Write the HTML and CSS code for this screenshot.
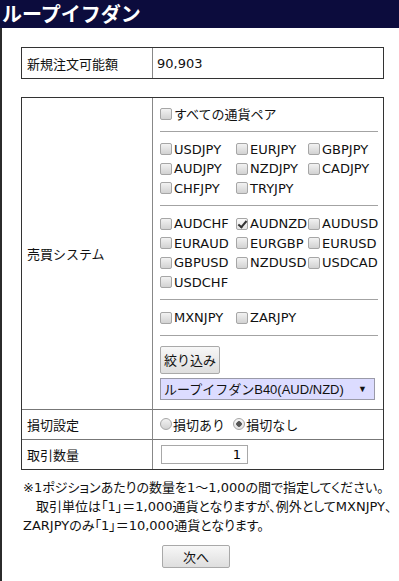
FILE: index.html
```html
<!DOCTYPE html>
<html lang="ja">
<head>
	<meta charset="UTF-8">
	<title>ループイフダン</title>
	<link rel="stylesheet" href="styles.css">
</head>
<body>
	<h1 class="page_title">ループイフダン</h1>
	<div class="page_body">
		<table class="form_table">
			<tr>
				<th>新規注文可能額</th>
				<td>90,903</td>
			</tr>
		</table>

		<table class="form_table order">
			<tr>
				<th>売買システム</th>
				<td class="pairs_cell">
					<label class="pair"><input type="checkbox">すべての通貨ペア</label>
					<hr>
					<div class="pair_list">
						<label class="pair"><input type="checkbox">USDJPY</label>
						<label class="pair"><input type="checkbox">EURJPY</label>
						<label class="pair"><input type="checkbox">GBPJPY</label>
						<label class="pair"><input type="checkbox">AUDJPY</label>
						<label class="pair"><input type="checkbox">NZDJPY</label>
						<label class="pair"><input type="checkbox">CADJPY</label>
						<label class="pair"><input type="checkbox">CHFJPY</label>
						<label class="pair"><input type="checkbox">TRYJPY</label>
					</div>
					<hr>
					<div class="pair_list">
						<label class="pair"><input type="checkbox">AUDCHF</label>
						<label class="pair"><input type="checkbox" checked>AUDNZD</label>
						<label class="pair"><input type="checkbox">AUDUSD</label>
						<label class="pair"><input type="checkbox">EURAUD</label>
						<label class="pair"><input type="checkbox">EURGBP</label>
						<label class="pair"><input type="checkbox">EURUSD</label>
						<label class="pair"><input type="checkbox">GBPUSD</label>
						<label class="pair"><input type="checkbox">NZDUSD</label>
						<label class="pair"><input type="checkbox">USDCAD</label>
						<label class="pair"><input type="checkbox">USDCHF</label>
					</div>
					<hr>
					<div class="pair_list">
						<label class="pair"><input type="checkbox">MXNJPY</label>
						<label class="pair"><input type="checkbox">ZARJPY</label>
					</div>
					<hr>
					<button class="btn filter_btn" type="button">絞り込み</button>
					<div class="system_select">
						<span>ループイフダンB40(AUD/NZD)</span>
						<span class="arrow">▼</span>
					</div>
				</td>
			</tr>
			<tr>
				<th>損切設定</th>
				<td>
					<label class="radio"><input type="radio" name="losscut">損切あり</label>
					<label class="radio"><input type="radio" name="losscut" checked>損切なし</label>
				</td>
			</tr>
			<tr>
				<th>取引数量</th>
				<td><input class="qty" type="text" value="1"></td>
			</tr>
		</table>

		<p class="note">※1ポジションあたりの数量を1～1,000の間で指定してください。<br>　取引単位は「1」＝1,000通貨となりますが、例外としてMXNJPY、<br>ZARJPYのみ「1」＝10,000通貨となります。</p>

		<button class="btn next_btn" type="button">次へ</button>
	</div>
</body>
</html>
```

FILE: styles.css
```css
* {
	box-sizing: border-box;
}
body {
	margin: 0;
	color: #111;
	background: #fff;
	font: 13px "DejaVu Sans", "Noto Sans CJK JP", sans-serif;
}
.page_title {
	margin: 0;
	height: 28px;
	padding-left: 2px;
	color: #fff;
	background: #0c0c3d;
	font: bold 20px/28px "Noto Sans CJK JP", sans-serif;
}
.page_body {
	min-height: 553px;
	padding: 19px 15px 12px 19px;
	border-left: 2px solid #2b2b2b;
}

/* tables */
.form_table {
	width: 100%;
	table-layout: fixed;
	border-collapse: separate;
	border-spacing: 0;
	border: 1px solid #333;
}
.form_table + .form_table {
	margin-top: 18px;
}
.form_table th {
	width: 130px;
	height: 30px;
	padding: 0 5px;
	font-weight: normal;
	text-align: left;
}
.form_table td {
	height: 30px;
	padding: 0 4px;
	border-left: 1px solid #888;
}
.form_table tr + tr th,
.form_table tr + tr td {
	border-top: 1px solid #777;
}
.order td {
	padding-left: 7px;
}
.order .pairs_cell {
	padding: 6px 5px 9px 7px;
}

/* checkboxes */
.pair {
	display: flex;
	align-items: center;
	height: 19.5px;
	white-space: nowrap;
}
.pair_list {
	display: grid;
	grid-template-columns: 76px 72px auto;
	grid-auto-rows: 19.5px;
}
.pair input {
	appearance: none;
	position: relative;
	width: 12px;
	height: 12px;
	margin: 0 2px 0 0;
	border: 1px solid #a6a6a6;
	border-radius: 2px;
	background: linear-gradient(#f2f2f2, #d2d2d2);
}
.pair input:checked {
	background: linear-gradient(#fafafa, #e4e4e4);
}
.pair input:checked::after {
	content: "";
	position: absolute;
	left: 3px;
	top: 0;
	width: 3px;
	height: 7px;
	border: solid #333;
	border-width: 0 2px 2px 0;
	transform: rotate(40deg);
}
.pairs_cell hr {
	height: 0;
	margin: 7px 0 8px;
	border: 0;
	border-top: 1px solid #a3a3a3;
}

/* buttons, select */
.btn {
	border: 1px solid #a9a9a9;
	border-radius: 2px;
	color: #111;
	background: linear-gradient(#f7f7f7, #dedede);
	font: 13px "Noto Sans CJK JP", sans-serif;
}
.filter_btn {
	display: block;
	height: 28px;
	margin-top: 10px;
	padding: 0 3px;
}
.system_select {
	display: flex;
	justify-content: space-between;
	align-items: center;
	width: 215px;
	height: 22px;
	margin-top: 4px;
	padding: 0 7px 0 3px;
	border: 1px solid #9a9aa8;
	background: #dcdcff;
	font-family: "Liberation Sans", "Noto Sans CJK JP", sans-serif;
}
.system_select .arrow {
	font-size: 9px;
}

/* radios */
.radio {
	display: inline-flex;
	align-items: center;
	margin-right: 4px;
}
.radio input {
	appearance: none;
	width: 12px;
	height: 12px;
	margin: 0 1px 0 0;
	border: 1px solid #a6a6a6;
	border-radius: 50%;
	background: linear-gradient(#f2f2f2, #d2d2d2);
}
.radio input:checked {
	background: radial-gradient(circle, #555 0 2.5px, transparent 3px), linear-gradient(#f7f7f7, #e2e2e2);
}

.qty {
	width: 87px;
	height: 19px;
	margin-left: 1px;
	padding: 0 6px;
	border: 1px solid #a8a8a8;
	text-align: right;
	font: 13px "DejaVu Sans", sans-serif;
}

.note {
	margin: 8px 0 0;
	padding-left: 2px;
	line-height: 19px;
	font-feature-settings: "palt";
	white-space: nowrap;
}
.next_btn {
	display: block;
	width: 68px;
	height: 23px;
	margin: 10px 0 0 141px;
}
```
